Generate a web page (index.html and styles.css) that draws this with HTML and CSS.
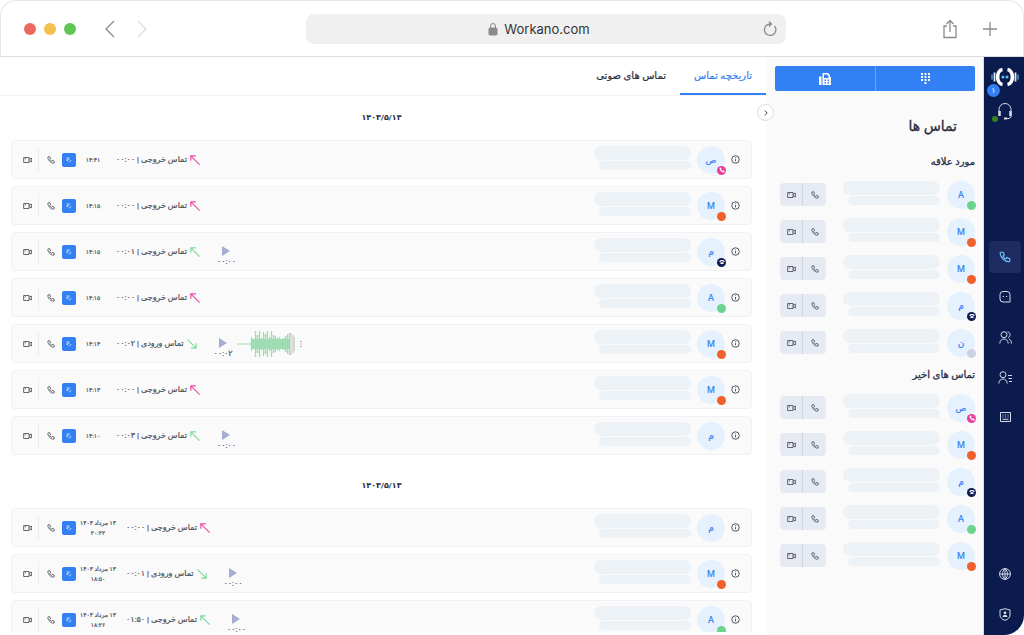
FILE: index.html
```html
<!DOCTYPE html>
<html lang="fa" dir="ltr">
<head>
<meta charset="utf-8">
<title>Workano.com</title>
<link rel="stylesheet" href="styles.css">
</head>
<body>
<svg class="sprite" aria-hidden="true">
  <symbol id="phone" viewBox="0 0 24 24"><path d="M3.500 2.500h5l2.200 5.600-2.700 2.200a14 14 0 0 0 5.600 5.600l2.200-2.800 5.700 2.300v5.100c0 .6-.5 1-1 1C11 21.500 2.500 13 2.500 3.500c0-.6.4-1 1-1z"/></symbol>
  <symbol id="video" viewBox="0 0 27 24"><path d="M2 4.500h16v15H2zM18 10l7-4v12l-7-4M5.500 8.500H9"/></symbol>
  <symbol id="note" viewBox="0 0 24 24"><path d="M2 4h14M2 9h11M2 14h6M11 18l3 3 7-9"/></symbol>
  <symbol id="info" viewBox="0 0 24 24"><circle cx="12" cy="12" r="10"/><path d="M12 11v6M12 6.500v2"/></symbol>
  <symbol id="out" viewBox="0 0 12 12"><path d="M11.500 11.500L1 1M1 7V1h6"/></symbol>
  <symbol id="in" viewBox="0 0 12 12"><path d="M.5.5L11 11M11 5v6H5"/></symbol>
  <symbol id="desk" viewBox="0 0 24 24"><path d="M2 8c4-5 16-5 20 0v4h-5V9H7v3H2zM7 13h10l2 7H5z"/></symbol>
</svg>

<header class="browser">
  <div class="browser-left">
    <span class="light red"></span><span class="light yellow"></span><span class="light green"></span>
    <button class="plain back" aria-label="Back"><svg width="12" height="18" viewBox="0 0 12 18"><path d="M10 1L2 9l8 8"/></svg></button>
    <button class="plain forward" aria-label="Forward"><svg width="12" height="18" viewBox="0 0 12 18"><path d="M2 1l8 8-8 8"/></svg></button>
  </div>
  <div class="address">
    <span class="site"><svg width="10" height="14" viewBox="0 0 10 14"><rect x="1" y="6" width="8" height="7" rx="1" fill="#8a8a8a"/><path d="M2.500 6V4a2.500 2.500 0 0 1 5 0v2"/></svg>Workano.com</span>
    <button class="plain" aria-label="Reload"><svg width="14" height="16" viewBox="0 0 14 16"><path d="M7.500 3A5.700 5.700 0 1 0 11.500 5M6 .5L8.500 3 6 5.500"/></svg></button>
  </div>
  <div class="browser-right">
    <button class="plain" aria-label="Share"><svg width="16" height="20" viewBox="0 0 16 20"><path d="M5 7H2v11.500h12V7h-3M8 13V1.500M4.500 5L8 1.500 11.500 5"/></svg></button>
    <button class="plain" aria-label="New tab"><svg width="14" height="14" viewBox="0 0 14 14"><path d="M7 0v14M0 7h14"/></svg></button>
  </div>
</header>

<div class="app" dir="rtl">
  <nav class="rail">
    <a class="logo" href="#" aria-label="Workano">
      <svg width="30" height="20" viewBox="0 0 30 20"><path d="M12.500 2.500C6 3.500 6 16.500 12.500 17.500M17.500 2.500c6.500 1 6.500 14 0 15" stroke="#fff" stroke-width="3.600"/><path d="M4.500 5.500v9M25.500 5.500v9" stroke="#dfe8f5" stroke-width="1.800"/><path d="M2 7.500v5M28 7.500v5" stroke="#4f9bd0" stroke-width="1.500"/><circle cx="13" cy="10" r="1.500" fill="#5fc0f5"/><circle cx="17" cy="10" r="1.500" fill="#5fc0f5"/></svg>
      <span class="badge">۱</span>
    </a>
    <button class="plain headset" aria-label="پشتیبانی">
      <svg width="16" height="18" viewBox="0 0 16 18" stroke="#d5dbea"><path d="M2 10V7.500a6 6 0 0 1 12 0V15l-2 1.500H8"/><path d="M2.500 9v5M13.500 9v5" stroke-width="2.500"/><path d="M7 16.500h3" stroke-width="2"/></svg>
      <span class="online"></span>
    </button>
    <div class="rail-items">
      <button class="rail-item active" aria-label="تماس"><svg width="12" height="12"><use href="#phone"/></svg></button>
      <button class="rail-item" aria-label="گفتگو"><svg width="12" height="12" viewBox="0 0 12 12"><path d="M1 3.500a3 3 0 0 1 3-3h4a3 3 0 0 1 3 3v7.500H4a3 3 0 0 1-3-3zM3.800 5.500h1.200M7 5.500h1.200"/></svg></button>
      <button class="rail-item" aria-label="مخاطبان"><svg width="13" height="13" viewBox="0 0 13 13"><circle cx="5" cy="3.700" r="3"/><path d="M.8 12.500c0-6 8.400-6 8.400 0M8.500.8c3.300.2 3.300 5.300.5 5.800M10 8c1.700.6 2.400 2.200 2.400 4.500"/></svg></button>
      <button class="rail-item" aria-label="فهرست"><svg width="14" height="13" viewBox="0 0 14 13"><circle cx="5" cy="3.700" r="3"/><path d="M.8 12.500c0-6 8.400-6 8.400 0M10 4.500h4M10.500 7.500H14M11 10.500h3"/></svg></button>
      <button class="rail-item" aria-label="صفحه کلید"><svg width="11" height="10" viewBox="0 0 11 10"><path d="M.5.5h10v9H.5zM2.500 3h1M5 3h1M7.500 3h1M2.500 5h1M5 5h1M7.500 5h1M2.500 7.300h6"/></svg></button>
    </div>
    <div class="rail-items rail-bottom">
      <button class="rail-item" aria-label="زبان"><svg width="12" height="12" viewBox="0 0 12 12"><circle cx="6" cy="6" r="5.400"/><path d="M.6 6h10.800M6 .6v10.800M6 .6c-3.300 3-3.300 7.800 0 10.800M6 .6c3.300 3 3.300 7.800 0 10.800"/></svg></button>
      <button class="rail-item" aria-label="حساب"><svg width="12" height="13" viewBox="0 0 12 13"><path d="M6 .7L11 2v5c0 2.500-2 4.300-5 5.400C3 11.300 1 9.500 1 7V2z"/><circle cx="6" cy="4.800" r="1" fill="#d5dbea"/><path d="M4 8.500c0-1.700 4-1.700 4 0z" fill="#d5dbea"/></svg></button>
    </div>
  </nav>

  <aside class="contacts">
    <div class="switch">
      <button aria-label="شماره گیر"><svg width="9" height="12" viewBox="0 0 9 12"><path fill="#fff" d="M0 0h2v2H0zM3.500 0h2v2h-2zM7 0h2v2H7zM0 3h2v2H0zM3.500 3h2v2h-2zM7 3h2v2H7zM0 6h2v2H0zM3.500 6h2v2h-2zM7 6h2v2H7zM3.500 9h2v2h-2z"/></svg></button>
      <button aria-label="فکس"><svg width="12" height="12" viewBox="0 0 12 12"><path fill="#fff" fill-rule="evenodd" d="M0 3.500h2.500V12H0zM3.500 0H9l2 2v2h1v8H3.500zM5 1.500V5h4.500V2.500H8.500v-1zM5.500 6.500V8H7V6.500zM8.500 6.500V8H10V6.500zM5.500 9v1.500H7V9zM8.500 9v1.500H10V9z"/></svg></button>
    </div>
    <h1>تماس ها</h1>
    <h2>مورد علاقه</h2>
    <ul>
      <li class="contact"><span class="avatar">A<i class="dot online-dot"></i></span><span class="ph"><i></i><i></i></span><span class="pair"><button aria-label="تماس"><svg width="8" height="8"><use href="#phone"/></svg></button><button aria-label="ویدیو"><svg width="9" height="8"><use href="#video"/></svg></button></span></li>
      <li class="contact"><span class="avatar">M<i class="dot busy"></i></span><span class="ph"><i></i><i></i></span><span class="pair"><button aria-label="تماس"><svg width="8" height="8"><use href="#phone"/></svg></button><button aria-label="ویدیو"><svg width="9" height="8"><use href="#video"/></svg></button></span></li>
      <li class="contact"><span class="avatar">M<i class="dot busy"></i></span><span class="ph"><i></i><i></i></span><span class="pair"><button aria-label="تماس"><svg width="8" height="8"><use href="#phone"/></svg></button><button aria-label="ویدیو"><svg width="9" height="8"><use href="#video"/></svg></button></span></li>
      <li class="contact"><span class="avatar">م<i class="dot desk"><svg width="6" height="6"><use href="#desk"/></svg></i></span><span class="ph"><i></i><i></i></span><span class="pair"><button aria-label="تماس"><svg width="8" height="8"><use href="#phone"/></svg></button><button aria-label="ویدیو"><svg width="9" height="8"><use href="#video"/></svg></button></span></li>
      <li class="contact"><span class="avatar">ن<i class="dot away"></i></span><span class="ph"><i></i><i></i></span><span class="pair"><button aria-label="تماس"><svg width="8" height="8"><use href="#phone"/></svg></button><button aria-label="ویدیو"><svg width="9" height="8"><use href="#video"/></svg></button></span></li>
    </ul>
    <h2>تماس های اخیر</h2>
    <ul>
      <li class="contact"><span class="avatar">ص<i class="dot calling"><svg width="6" height="6"><use href="#phone"/></svg></i></span><span class="ph"><i></i><i></i></span><span class="pair"><button aria-label="تماس"><svg width="8" height="8"><use href="#phone"/></svg></button><button aria-label="ویدیو"><svg width="9" height="8"><use href="#video"/></svg></button></span></li>
      <li class="contact"><span class="avatar">M<i class="dot busy"></i></span><span class="ph"><i></i><i></i></span><span class="pair"><button aria-label="تماس"><svg width="8" height="8"><use href="#phone"/></svg></button><button aria-label="ویدیو"><svg width="9" height="8"><use href="#video"/></svg></button></span></li>
      <li class="contact"><span class="avatar">م<i class="dot desk"><svg width="6" height="6"><use href="#desk"/></svg></i></span><span class="ph"><i></i><i></i></span><span class="pair"><button aria-label="تماس"><svg width="8" height="8"><use href="#phone"/></svg></button><button aria-label="ویدیو"><svg width="9" height="8"><use href="#video"/></svg></button></span></li>
      <li class="contact"><span class="avatar">A<i class="dot online-dot"></i></span><span class="ph"><i></i><i></i></span><span class="pair"><button aria-label="تماس"><svg width="8" height="8"><use href="#phone"/></svg></button><button aria-label="ویدیو"><svg width="9" height="8"><use href="#video"/></svg></button></span></li>
      <li class="contact"><span class="avatar">M<i class="dot busy"></i></span><span class="ph"><i></i><i></i></span><span class="pair"><button aria-label="تماس"><svg width="8" height="8"><use href="#phone"/></svg></button><button aria-label="ویدیو"><svg width="9" height="8"><use href="#video"/></svg></button></span></li>
    </ul>
  </aside>

  <main class="history">
    <button class="collapse" aria-label="بستن"><svg width="4" height="6" viewBox="0 0 4 6"><path d="M.7.500L3.200 3 .7 5.500"/></svg></button>
    <div class="tabs">
      <a class="tab current" href="#">تاریخچه تماس</a>
      <a class="tab" href="#">تماس های صوتی</a>
    </div>
    <div class="days">
      <h3>۱۴۰۳/۵/۱۴</h3>
      <article class="call">
        <button class="plain more" aria-label="جزئیات"><svg width="9" height="9"><use href="#info"/></svg></button><span class="avatar">ص<i class="dot calling"><svg width="6" height="6"><use href="#phone"/></svg></i></span><span class="ph"><i></i><i></i></span>
        <div class="detail" dir="ltr"><button class="plain video" aria-label="ویدیو"><svg width="9" height="8"><use href="#video"/></svg></button><button class="plain dial" aria-label="تماس"><svg width="8" height="8"><use href="#phone"/></svg></button><button class="note" aria-label="یادداشت"><svg width="6" height="6"><use href="#note"/></svg></button><time dir="rtl">۱۴:۴۱</time><span class="label" dir="rtl">تماس خروجی | ۰۰:۰۰</span><svg class="arrow missed" width="10" height="10"><use href="#out"/></svg></div>
      </article>
      <article class="call">
        <button class="plain more" aria-label="جزئیات"><svg width="9" height="9"><use href="#info"/></svg></button><span class="avatar">M<i class="dot busy"></i></span><span class="ph"><i></i><i></i></span>
        <div class="detail" dir="ltr"><button class="plain video" aria-label="ویدیو"><svg width="9" height="8"><use href="#video"/></svg></button><button class="plain dial" aria-label="تماس"><svg width="8" height="8"><use href="#phone"/></svg></button><button class="note" aria-label="یادداشت"><svg width="6" height="6"><use href="#note"/></svg></button><time dir="rtl">۱۴:۱۵</time><span class="label" dir="rtl">تماس خروجی | ۰۰:۰۰</span><svg class="arrow missed" width="10" height="10"><use href="#out"/></svg></div>
      </article>
      <article class="call">
        <button class="plain more" aria-label="جزئیات"><svg width="9" height="9"><use href="#info"/></svg></button><span class="avatar">م<i class="dot desk"><svg width="6" height="6"><use href="#desk"/></svg></i></span><span class="ph"><i></i><i></i></span>
        <div class="detail" dir="ltr"><button class="plain video" aria-label="ویدیو"><svg width="9" height="8"><use href="#video"/></svg></button><button class="plain dial" aria-label="تماس"><svg width="8" height="8"><use href="#phone"/></svg></button><button class="note" aria-label="یادداشت"><svg width="6" height="6"><use href="#note"/></svg></button><time dir="rtl">۱۴:۱۵</time><span class="label" dir="rtl">تماس خروجی | ۰۰:۰۱</span><svg class="arrow" width="10" height="10"><use href="#out"/></svg><button class="play" aria-label="پخش"><svg width="8" height="10" viewBox="0 0 8 10"><path d="M0 0l8 5-8 5z"/></svg><span>۰۰:۰۰</span></button></div>
      </article>
      <article class="call">
        <button class="plain more" aria-label="جزئیات"><svg width="9" height="9"><use href="#info"/></svg></button><span class="avatar">A<i class="dot online-dot"></i></span><span class="ph"><i></i><i></i></span>
        <div class="detail" dir="ltr"><button class="plain video" aria-label="ویدیو"><svg width="9" height="8"><use href="#video"/></svg></button><button class="plain dial" aria-label="تماس"><svg width="8" height="8"><use href="#phone"/></svg></button><button class="note" aria-label="یادداشت"><svg width="6" height="6"><use href="#note"/></svg></button><time dir="rtl">۱۴:۱۵</time><span class="label" dir="rtl">تماس خروجی | ۰۰:۰۰</span><svg class="arrow missed" width="10" height="10"><use href="#out"/></svg></div>
      </article>
      <article class="call">
        <button class="plain more" aria-label="جزئیات"><svg width="9" height="9"><use href="#info"/></svg></button><span class="avatar">M<i class="dot busy"></i></span><span class="ph"><i></i><i></i></span>
        <div class="detail" dir="ltr"><button class="plain video" aria-label="ویدیو"><svg width="9" height="8"><use href="#video"/></svg></button><button class="plain dial" aria-label="تماس"><svg width="8" height="8"><use href="#phone"/></svg></button><button class="note" aria-label="یادداشت"><svg width="6" height="6"><use href="#note"/></svg></button><time dir="rtl">۱۴:۱۴</time><span class="label" dir="rtl">تماس ورودی | ۰۰:۰۲</span><svg class="arrow" width="10" height="10"><use href="#in"/></svg><button class="play" aria-label="پخش"><svg width="8" height="10" viewBox="0 0 8 10"><path d="M0 0l8 5-8 5z"/></svg><span>۰۰:۰۲</span></button>
          <svg class="wave" width="58" height="28" viewBox="0 0 58 28"><path d="M0 14h14" stroke="#9edcb4"/><path d="M14.500 7v14M16.500 10v8M18.500 1v26M20.500 5v18M22.500 1v26M24.500 8v12M26.500 2v24M28.500 4v20M30.500 1v26M32.500 7v14M34.500 1v26M36.500 5v18M38.500 6v16M40.500 8v12M42.500 7v14M44.500 9v10M46.500 8v12M48.500 6v16M50.500 4v20M52.500 3v22" stroke="#9edcb4" stroke-width="1.400"/><path d="M14 9h39v10H14z" fill="#9edcb4"/><path d="M54 3v22M56 5v18M57.500 7v14" stroke="#d4d4d4" stroke-width="1.500"/></svg>
          <button class="plain menu" aria-label="گزینه ها"><svg width="2" height="6" viewBox="0 0 2 6"><path d="M.5 0h1v1h-1zM.5 2.500h1v1h-1zM.5 5h1v1h-1z"/></svg></button></div>
      </article>
      <article class="call">
        <button class="plain more" aria-label="جزئیات"><svg width="9" height="9"><use href="#info"/></svg></button><span class="avatar">M<i class="dot busy"></i></span><span class="ph"><i></i><i></i></span>
        <div class="detail" dir="ltr"><button class="plain video" aria-label="ویدیو"><svg width="9" height="8"><use href="#video"/></svg></button><button class="plain dial" aria-label="تماس"><svg width="8" height="8"><use href="#phone"/></svg></button><button class="note" aria-label="یادداشت"><svg width="6" height="6"><use href="#note"/></svg></button><time dir="rtl">۱۴:۱۳</time><span class="label" dir="rtl">تماس خروجی | ۰۰:۰۰</span><svg class="arrow missed" width="10" height="10"><use href="#out"/></svg></div>
      </article>
      <article class="call">
        <button class="plain more" aria-label="جزئیات"><svg width="9" height="9"><use href="#info"/></svg></button><span class="avatar">م</span><span class="ph"><i></i><i></i></span>
        <div class="detail" dir="ltr"><button class="plain video" aria-label="ویدیو"><svg width="9" height="8"><use href="#video"/></svg></button><button class="plain dial" aria-label="تماس"><svg width="8" height="8"><use href="#phone"/></svg></button><button class="note" aria-label="یادداشت"><svg width="6" height="6"><use href="#note"/></svg></button><time dir="rtl">۱۴:۱۰</time><span class="label" dir="rtl">تماس خروجی | ۰۰:۰۳</span><svg class="arrow" width="10" height="10"><use href="#out"/></svg><button class="play" aria-label="پخش"><svg width="8" height="10" viewBox="0 0 8 10"><path d="M0 0l8 5-8 5z"/></svg><span>۰۰:۰۰</span></button></div>
      </article>
      <h3>۱۴۰۳/۵/۱۳</h3>
      <article class="call">
        <button class="plain more" aria-label="جزئیات"><svg width="9" height="9"><use href="#info"/></svg></button><span class="avatar">م</span><span class="ph"><i></i><i></i></span>
        <div class="detail" dir="ltr"><button class="plain video" aria-label="ویدیو"><svg width="9" height="8"><use href="#video"/></svg></button><button class="plain dial" aria-label="تماس"><svg width="8" height="8"><use href="#phone"/></svg></button><button class="note" aria-label="یادداشت"><svg width="6" height="6"><use href="#note"/></svg></button><time class="dated" dir="rtl">۱۳ مرداد ۱۴۰۳<br>۲۰:۲۲</time><span class="label" dir="rtl">تماس خروجی | ۰۰:۰۰</span><svg class="arrow missed" width="10" height="10"><use href="#out"/></svg></div>
      </article>
      <article class="call">
        <button class="plain more" aria-label="جزئیات"><svg width="9" height="9"><use href="#info"/></svg></button><span class="avatar">M<i class="dot busy"></i></span><span class="ph"><i></i><i></i></span>
        <div class="detail" dir="ltr"><button class="plain video" aria-label="ویدیو"><svg width="9" height="8"><use href="#video"/></svg></button><button class="plain dial" aria-label="تماس"><svg width="8" height="8"><use href="#phone"/></svg></button><button class="note" aria-label="یادداشت"><svg width="6" height="6"><use href="#note"/></svg></button><time class="dated" dir="rtl">۱۳ مرداد ۱۴۰۳<br>۱۸:۵۰</time><span class="label" dir="rtl">تماس ورودی | ۰۰:۰۱</span><svg class="arrow" width="10" height="10"><use href="#in"/></svg><button class="play" aria-label="پخش"><svg width="8" height="10" viewBox="0 0 8 10"><path d="M0 0l8 5-8 5z"/></svg><span>۰۰:۰۰</span></button></div>
      </article>
      <article class="call">
        <button class="plain more" aria-label="جزئیات"><svg width="9" height="9"><use href="#info"/></svg></button><span class="avatar">A<i class="dot online-dot"></i></span><span class="ph"><i></i><i></i></span>
        <div class="detail" dir="ltr"><button class="plain video" aria-label="ویدیو"><svg width="9" height="8"><use href="#video"/></svg></button><button class="plain dial" aria-label="تماس"><svg width="8" height="8"><use href="#phone"/></svg></button><button class="note" aria-label="یادداشت"><svg width="6" height="6"><use href="#note"/></svg></button><time class="dated" dir="rtl">۱۳ مرداد ۱۴۰۳<br>۱۸:۲۶</time><span class="label" dir="rtl">تماس خروجی | ۰۱:۵۰</span><svg class="arrow" width="10" height="10"><use href="#out"/></svg><button class="play" aria-label="پخش"><svg width="8" height="10" viewBox="0 0 8 10"><path d="M0 0l8 5-8 5z"/></svg><span>۰۰:۰۰</span></button></div>
      </article>
    </div>
  </main>
</div>
</body>
</html>
```
FILE: styles.css
```css
* { box-sizing: border-box; }
body {
  margin: 0;
  height: 100vh;
  display: flex;
  flex-direction: column;
  background: #fff;
  color: #2b2d42;
  font-family: Roboto, "DejaVu Sans", sans-serif;
  font-size: 10px;
}
svg { display: block; fill: none; flex: none; }
button { font: inherit; color: inherit; cursor: pointer; padding: 0; }
ul { list-style: none; margin: 0; padding: 0; }
.sprite { position: absolute; width: 0; height: 0; }
.plain { background: none; border: 0; }

/* Browser bar */
.browser {
  flex: none;
  height: 57px;
  display: grid;
  grid-template-columns: 305fr 480fr 237fr;
  align-items: center;
  border: 1px solid #e6e6e6;
  border-bottom-color: #dcdcdc;
  border-radius: 16px 16px 0 0;
}
.browser svg { stroke: #8a8a8a; stroke-width: 1.3; }
.browser-left { display: flex; align-items: center; gap: 8px; padding-left: 23px; }
.light { width: 12px; height: 12px; border-radius: 50%; }
.red { background: #ed6a5e; }
.yellow { background: #f5bf4f; }
.green { background: #61c554; }
.back { margin-left: 20px; }
.forward { margin-left: 12px; }
.browser .forward svg { stroke: #dedede; }
.address {
  height: 30px;
  display: flex;
  align-items: center;
  padding: 0 9px;
  border-radius: 8px;
  background: #f0f0f0;
}
.site {
  flex: 1;
  display: flex;
  align-items: center;
  justify-content: center;
  gap: 6px;
  font: 13px Inter, Roboto, sans-serif;
  color: #333;
}
.site svg { stroke-width: 1; }
.browser-right { display: flex; align-items: center; justify-content: flex-end; gap: 25px; padding-right: 26px; }

/* Page frame */
.app { flex: 1; min-height: 0; display: flex; }

.rail {
  flex: none;
  width: 40px;
  display: flex;
  flex-direction: column;
  align-items: center;
  padding: 10px 0 5px 2px;
  background: #0b1b4d;
  border-radius: 0 0 20px 0;
}
.logo { position: relative; }
.badge {
  position: absolute;
  left: -3px;
  top: 17px;
  width: 13px;
  height: 13px;
  border-radius: 50%;
  background: #3380f4;
  color: #fff;
  font-size: 8px;
  line-height: 13px;
  text-align: center;
}
.headset { position: relative; margin-top: 15px; }
.online {
  position: absolute;
  left: -5px;
  bottom: -2px;
  width: 6px;
  height: 6px;
  border-radius: 50%;
  background: #36811f;
}
.rail-items { display: flex; flex-direction: column; gap: 8px; margin-top: 121px; }
.rail-bottom { margin-top: auto; }
.rail-item {
  width: 32px;
  height: 32px;
  display: grid;
  place-items: center;
  border: 0;
  border-radius: 4px;
  background: none;
}
.rail-item svg { stroke: #d5dbea; }
.rail-item.active { background: #1d2c60; }
.rail-item.active svg { stroke: #6cbcf5; stroke-width: 2.4; }

/* Contacts */
.contacts {
  flex: none;
  width: 218px;
  padding: 9px 8px 0 9px;
  background: #fafafa;
  border-right: 1px solid #d9dce6;
  overflow: hidden;
}
.switch { display: flex; border-radius: 2px; overflow: hidden; }
.switch button {
  flex: 1;
  height: 25px;
  display: grid;
  place-items: center;
  border: 0;
  background: #3380f4;
}
.switch button + button { border-right: 1px solid #6aa3f8; }
.contacts h1 { margin: 22px 18px 9px; font-size: 14px; line-height: 26px; font-weight: 400; -webkit-text-stroke: 0.3px; }
.contacts h2 { margin: 0; font-size: 10px; line-height: 28px; font-weight: 400; -webkit-text-stroke: 0.3px; }
.contact { height: 37px; display: flex; align-items: center; padding-left: 5px; }
.pair { display: flex; margin-right: auto; border-radius: 4px; overflow: hidden; background: #e6eaf3; }
.pair button { width: 23px; height: 23px; display: grid; place-items: center; border: 0; background: none; }
.pair button + button { border-right: 1px solid #d0d4df; }
.pair svg, .more svg, .video svg, .dial svg { stroke: #4d4f59; stroke-width: 2.6; }

.avatar {
  position: relative;
  flex: none;
  width: 28px;
  height: 28px;
  border-radius: 50%;
  background: #e6f1fe;
  color: #3380f4;
  font-size: 9px;
  line-height: 28px;
  text-align: center;
  -webkit-text-stroke: 0.2px;
}
.dot {
  position: absolute;
  right: -1px;
  bottom: -1px;
  width: 9px;
  height: 9px;
  display: grid;
  place-items: center;
  border-radius: 50%;
}
.dot svg { fill: #fff; }
.online-dot { background: #6bd48e; }
.busy { background: #f0602c; }
.desk { background: #0f1d50; }
.away { background: #ccd2e3; }
.calling { background: #e83e9c; }

.ph { flex: none; display: flex; flex-direction: column; gap: 1px; margin-right: 7px; margin-top: -3px; }
.ph i { width: 97px; height: 14px; border-radius: 7px; background: #edf2f7; }
.ph i + i { width: 92px; height: 9px; border-radius: 5px; }

/* Call history */
.history { position: relative; flex: 1; min-width: 0; display: flex; flex-direction: column; padding-bottom: 3px; }
.collapse {
  position: absolute;
  right: -8px;
  top: 47px;
  width: 17px;
  height: 17px;
  display: grid;
  place-items: center;
  border: 1px solid #dcdcdf;
  border-radius: 50%;
  background: #fff;
}
.collapse svg { stroke: #444; }
.tabs { flex: none; display: flex; height: 39px; border-bottom: 1px solid #f3f3f3; }
.tab {
  padding: 0 14px;
  line-height: 38px;
  color: #2b2d42;
  text-decoration: none;
  border-bottom: 2px solid transparent;
  -webkit-text-stroke: 0.2px;
}
.tab.current { color: #3380f4; border-color: #3380f4; }
.days {
  flex: 1;
  min-height: 0;
  display: flex;
  flex-direction: column;
  gap: 7px;
  padding: 8px 14px 0 11px;
  overflow: hidden;
}
.days h3 { flex: none; margin: 0; padding-bottom: 1px; font-size: 8px; line-height: 28px; text-align: center; font-weight: 700; }
.call + h3 { margin-top: 10px; }
.call {
  flex: none;
  height: 39px;
  display: flex;
  align-items: center;
  padding: 0 11px;
  border: 1px solid #f1f1f5;
  border-radius: 4px;
  background: #fafafa;
}
.call .avatar { margin-right: 6px; }
.call .ph { margin-right: 6px; }
.detail { flex: 1; align-self: stretch; display: flex; align-items: center; color: #4d4f59; -webkit-text-stroke: 0.2px; }
.video { height: 24px; padding-right: 6px; border-right: 1px solid #ededf1; }
.dial { margin-left: 8px; }
.note {
  width: 14px;
  height: 14px;
  margin-left: 7px;
  display: grid;
  place-items: center;
  border: 0;
  border-radius: 2px;
  background: #3380f4;
}
.note svg { stroke: #fff; stroke-width: 2.6; }
time { min-width: 34px; font-size: 6px; line-height: 10px; text-align: center; white-space: nowrap; }
time.dated { min-width: 44px; }
.label { margin-left: 6px; font-size: 8px; line-height: 16px; white-space: nowrap; }
.arrow { margin-left: 3px; stroke: #7fd89c; stroke-width: 1.4; }
.arrow.missed { stroke: #ec4aa6; }
.play {
  align-self: flex-end;
  display: flex;
  flex-direction: column;
  align-items: center;
  margin-left: 17px;
  padding-bottom: 3px;
  border: 0;
  background: none;
  font-size: 8px;
  line-height: 11px;
}
.play svg { fill: #a5add2; }
.wave { margin-left: 4px; }
.menu { margin-left: 5px; }
.menu svg { fill: #777; }
```
